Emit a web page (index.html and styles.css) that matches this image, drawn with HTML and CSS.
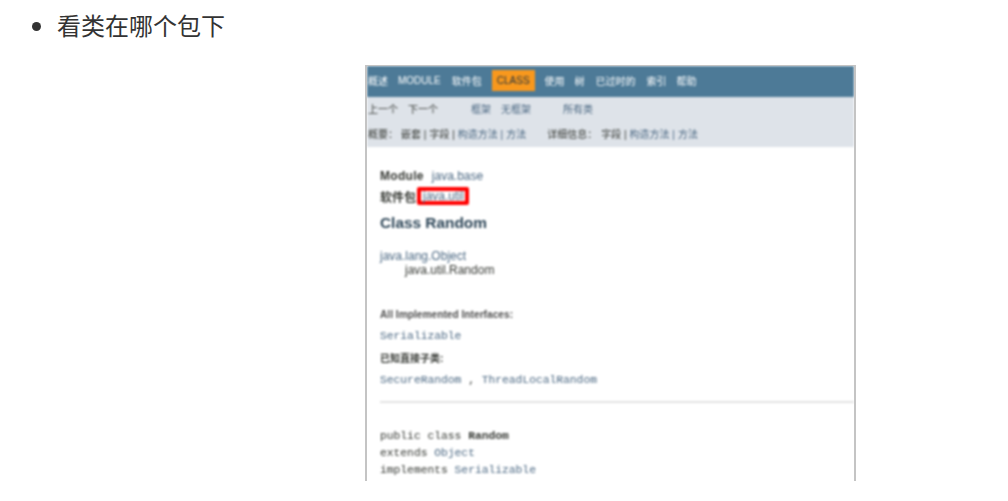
FILE: index.html
```html
<!DOCTYPE html>
<html lang="zh">
<head>
<meta charset="utf-8">
<title>看类在哪个包下</title>
<link rel="stylesheet" href="styles.css">
</head>
<body>
<ul class="list"><li>看类在哪个包下</li></ul>
<div class="figure">
  <div class="doc">
    <div class="blur">
      <nav class="topnav">
        <span>概述</span><span class="wide">MODULE</span><span>软件包</span><span class="active">CLASS</span><span>使用</span><span class="wide">树</span><span class="wide">已过时的</span><span>索引</span><span>帮助</span>
      </nav>
      <div class="subnav">
        <div class="subrow">
          <span>上一个</span><span>下一个</span><span class="link push1">框架</span><span class="link">无框架</span><span class="link push2">所有类</span>
        </div>
        <div class="subrow tight">
          <span class="label">概要：</span><span>嵌套 |</span><span>字段 |</span><span class="link">构造方法 |</span><span class="link">方法</span>
          <span class="label push3">详细信息：</span><span>字段 |</span><span class="link">构造方法 |</span><span class="link">方法</span>
        </div>
      </div>
      <main class="content">
        <div class="module"><b>Module</b><a>java.base</a></div>
        <div class="package"><b>软件包</b><a class="mark">java.util</a></div>
        <h2 class="title">Class Random</h2>
        <div class="tree"><a>java.lang.Object</a><div class="child">java.util.Random</div></div>
        <div class="dt first">All Implemented Interfaces:</div>
        <div class="code"><a>Serializable</a></div>
        <div class="dt cjk">已知直接子类:</div>
        <div class="code"><a>SecureRandom</a> , <a>ThreadLocalRandom</a></div>
        <hr class="rule">
        <pre class="sig">public class <b>Random</b>
extends <a>Object</a>
implements <a>Serializable</a></pre>
      </main>
    </div>
  </div>
</div>
</body>
</html>
```
FILE: styles.css
```css
html, body { margin: 0; padding: 0; background: #fff; }
body { height: 501px; overflow: hidden; font-family: "Liberation Sans", "Noto Sans CJK SC", sans-serif; }

.list { margin: 0; padding: 8px 0 0 57px; height: 65px; box-sizing: border-box; color: #333; font: 24px/34px "Noto Sans CJK SC", sans-serif; }

.figure { padding-left: 365px; }
.doc { width: 491px; height: 416px; box-sizing: border-box; border: solid #c4c4c4; border-width: 1px 2px 0 2px; overflow: hidden; background: #fff; }
.blur { filter: blur(0.8px); width: 487px; }

.topnav { height: 31px; box-sizing: border-box; background: #4d7a97; display: flex; align-items: center; gap: 10px; padding: 0 0 3px 1px; color: #fff; font-size: 10px; }
.topnav .wide { margin-right: 1px; }
.topnav .active { background: #f8981d; color: #253441; padding: 0 5px; line-height: 21px; }

.subnav { height: 50px; background: #dee3e9; color: #353833; font-size: 10px; padding: 5px 0 0 1px; box-sizing: border-box; }
.subrow { display: flex; gap: 10px; height: 16px; line-height: 16px; }
.subrow.tight { margin-top: 9px; gap: 3px; }
.link { color: #4a6782; }
.push1 { margin-left: 23px; }
.push2 { margin-left: 22px; }
.label { width: 30px; white-space: nowrap; }
.label.push3 { width: 51px; margin-left: 18px; }

.content { padding: 22px 0 0 13px; font-size: 12px; color: #353833; }
.content a { color: #4a6782; }
.module { line-height: 14px; }
.module b { margin-right: 8px; letter-spacing: .3px; }
.package { margin-top: 4px; height: 18px; display: flex; align-items: center; font-weight: 400; }
.mark { border: 4px solid #f00; border-radius: 2px; padding: 0 1px 0 2px; line-height: 10px; margin-left: 1px; }
.title { margin: 8px 0 0; font-size: 15.4px; line-height: 20px; color: #2c4557; }
.tree { margin-top: 16px; font-size: 12px; line-height: 14px; }
.child { padding-left: 25px; }
.dt { margin-top: 9px; font-size: 10.2px; line-height: 14px; font-weight: 700; color: #4e4e4e; }
.dt.first { margin-top: 31px; }
.dt.cjk { font-size: 10px; color: #353833; }
.code { margin-top: 7px; font: 11.3px/14px "Liberation Mono", monospace; white-space: pre; }
.rule { margin: 14px 0 0; border: 0; height: 2px; background: #e3e3e3; }
.sig { margin: 25px 0 0; font: 11.3px/17px "Liberation Mono", monospace; color: #353833; }
```
